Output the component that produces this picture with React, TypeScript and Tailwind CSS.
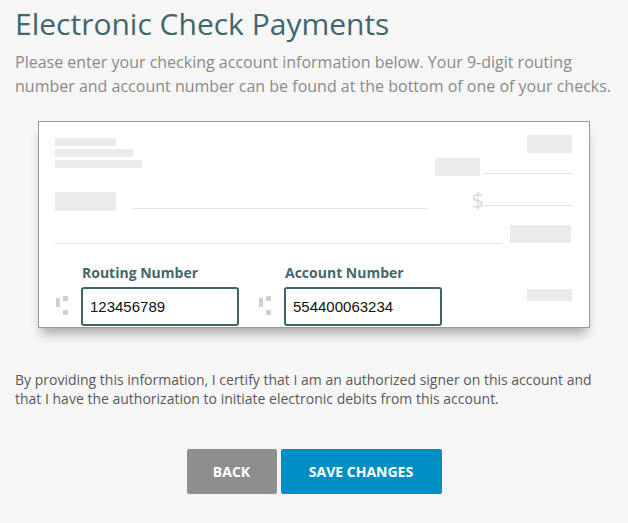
import React from 'react'

const Bar = ({ className }: { className: string }) => <div className={`bg-[#ebebeb] ${className}`} />

const Line = ({ className }: { className: string }) => <div className={`h-px bg-[#e4e4e4] ${className}`} />

// MICR transit glyph, drawn as blocks
const TransitIcon = () => (
	<svg width="13" height="20" viewBox="0 0 13 20" className="shrink-0">
		<rect x="0" y="2" width="4" height="9" fill="#cfcfcf" />
		<rect x="7" y="0" width="5" height="5" fill="#cfcfcf" />
		<rect x="7" y="14" width="5" height="5" fill="#cfcfcf" />
	</svg>
)

const Field = ({ label, value }: { label: string; value: string }) => (
	<div className="flex flex-col">
		<label className="pl-px text-[14px] leading-[20px] font-bold text-[#44676d] mb-[4px]">{label}</label>
		<input
			readOnly
			value={value}
			className="w-[158px] h-[39px] border-2 border-[#406567] rounded-[3px] bg-white px-[7px] text-[15px] text-[#111] outline-none"
			style={{ fontFamily: '"Liberation Sans", Arial, sans-serif' }}
		/>
	</div>
)

export default function App() {
	return (
		<div className="min-h-screen bg-[#f6f6f6] px-[15px] pt-[7px] pb-8" style={{ fontFamily: '"Open Sans", sans-serif' }}>
			<h1 className="text-[30px] leading-[34px] text-[#41666c] font-normal">Electronic Check Payments</h1>
			<p className="mt-[9px] text-[16px] leading-[24px] text-[#8a8a8a]">
				Please enter your checking account information below. Your 9-digit routing number and account number can be found at the bottom of one of your checks.
			</p>

			<div className="mx-auto mt-[23px] w-[552px] border border-[#9a9a9a] bg-white pl-[16px] pr-[17px] pt-[13px] pb-px shadow-[0_9px_10px_-3px_rgba(0,0,0,0.3)]">
				<div className="flex justify-between">
					<div className="mt-[3px] flex flex-col gap-[3px]">
						<Bar className="w-[61px] h-[8px]" />
						<Bar className="w-[78px] h-[8px]" />
						<Bar className="w-[87px] h-[8px]" />
					</div>
					<div className="flex flex-col items-end">
						<Bar className="w-[45px] h-[18px]" />
						<div className="mt-[5px] flex items-end gap-[4px]">
							<Bar className="w-[45px] h-[18px]" />
							<Line className="w-[88px] mb-[2px]" />
						</div>
					</div>
				</div>

				<div className="mt-[11px] flex items-end justify-between">
					<div className="flex items-end gap-[17px]">
						<Bar className="w-[61px] h-[19px]" />
						<Line className="w-[294px] mb-[2px]" />
					</div>
					<div className="flex items-end">
						<span className="text-[22px] leading-[24px] text-[#dcdcdc]">$</span>
						<Line className="w-[88px] mb-[5px]" />
					</div>
				</div>

				<div className="mt-[14px] flex items-end justify-between">
					<Line className="w-[447px]" />
					<Bar className="w-[61px] h-[18px] mb-[1px] mr-px" />
				</div>

				<div className="mt-[19px] flex items-end">
					<div className="ml-px flex items-end gap-[12px]">
						<div className="mb-[10px]"><TransitIcon /></div>
						<Field label="Routing Number" value="123456789" />
					</div>
					<div className="ml-[20px] flex items-end gap-[12px]">
						<div className="mb-[10px]"><TransitIcon /></div>
						<Field label="Account Number" value="554400063234" />
					</div>
					<Bar className="ml-auto w-[45px] h-[12px] mb-[25px]" />
				</div>
			</div>

			<p className="mt-[42px] text-[14px] leading-[19px] text-[#595959]">
				By providing this information, I certify that I am an authorized signer on this account and that I have the authorization to initiate electronic debits from this account.
			</p>

			<div className="mt-[41px] flex justify-center gap-[4px]">
				<button className="w-[90px] h-[45px] rounded-[2px] bg-[#8e8e8e] text-white text-[14px] font-bold">BACK</button>
				<button className="w-[161px] h-[45px] rounded-[2px] bg-[#008fc4] text-white text-[14px] font-bold">SAVE CHANGES</button>
			</div>
		</div>
	)
}
